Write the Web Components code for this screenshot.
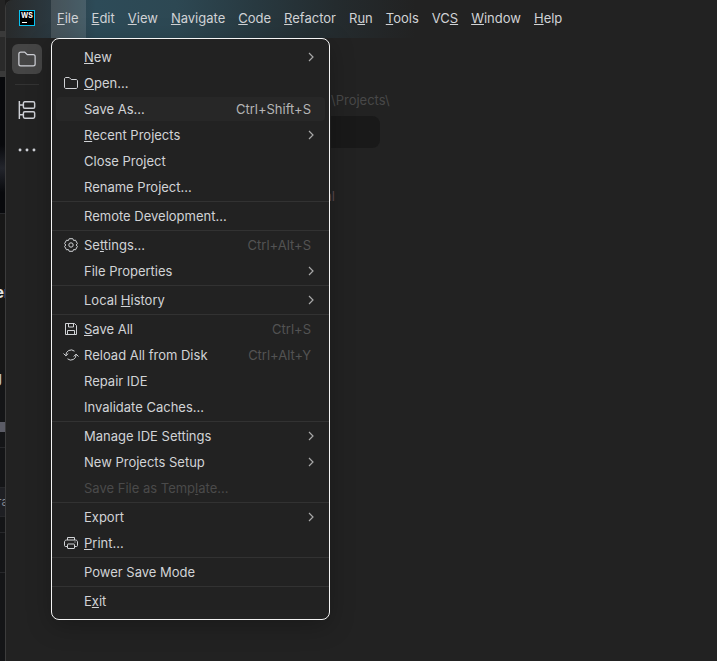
<!DOCTYPE html>
<html lang="en">
<head>
<meta charset="utf-8">
<title>WebStorm</title>
<style>
    html, body {
        height: 100%;
        margin: 0;
    }

    body {
        background: #1a1a1a;
        color: #d1d3d6;
        font: 13px/16px Inter, "Liberation Sans", sans-serif;
        overflow: hidden;
    }
</style>
</head>
<body>
<ide-desktop></ide-desktop>

<script>
const ICONS = {
    folder: `<path d="M1.500 4c0-.9.6-1.500 1.500-1.500h3.200l2 2H13c.9 0 1.500.6 1.500 1.500v6c0 .9-.6 1.500-1.500 1.500H3c-.9 0-1.500-.6-1.500-1.500z"/>`,
    structure: `<g stroke-width="1.300"><path d="M1.200 0v16M1.200 3.500h3.500M1.200 12.200h3.500"/><rect x="4.800" y=".7" width="10" height="5.800" rx="1.200"/><rect x="4.800" y="9.500" width="10" height="5.800" rx="1.200"/></g>`,
    more: `<g fill="currentColor" stroke="none"><circle cx="1.800" cy="8" r="1.300"/><circle cx="8" cy="8" r="1.300"/><circle cx="14.200" cy="8" r="1.300"/></g>`,
    settings: `<path d="M6.200 1.700h3.600l.8 1.800 1.900-.3 1.900 3.400L13.200 8l1.200 1.400-1.900 3.400-1.900-.3-.8 1.800H6.200l-.8-1.800-1.900.3-1.900-3.400L2.800 8 1.600 6.600l1.900-3.400 1.900.3z"/><circle cx="8" cy="8" r="2.200"/>`,
    save: `<path d="M2.500 2.500h9l2 2v9h-11zM5.500 2.500v3.500h5v-3.500M4.500 13.500v-4h7v4"/>`,
    reload: `<path d="M2.900 8.500a5.200 5.200 0 0 1 8.600-4.300M13.100 7.500a5.200 5.200 0 0 1-8.600 4.300M.5 6.500l2.400 2.400 2.400-2.400M10.700 9.500l2.400-2.400 2.400 2.400"/>`,
    print: `<path d="M4.500 5V2.500h7V5M4 11.500H2.500c-.6 0-1-.4-1-1V7c0-1.100.9-2 2-2h9c1.100 0 2 .9 2 2v3.500c0 .6-.4 1-1 1H12"/><rect x="4.500" y="9" width="7" height="4.500" rx=".5"/><path d="M11.500 7h1"/>`
};

// "_" marks the mnemonic: the letter after it is underlined
function mnemonic(text) {
    return text.replace(/_(.)/, "<u>$1</u>");
}

const UNDERLINE = `
    u {
        text-decoration: underline;
        text-decoration-thickness: 1px;
        text-underline-offset: 1px;
        text-decoration-skip-ink: none;
    }
`;

class IdeIcon extends HTMLElement {
    connectedCallback() {
        this.attachShadow({mode: "open"});
        this.shadowRoot.innerHTML = `
            <style>
                :host {
                    display: block;
                    flex: none;
                    width: var(--icon-size, 16px);
                    height: var(--icon-size, 16px);
                }

                svg {
                    display: block;
                    width: 100%;
                    height: 100%;
                    overflow: visible;
                    fill: none;
                    stroke: currentColor;
                    stroke-linejoin: round;
                }
            </style>
            <svg viewBox="0 0 16 16" aria-hidden="true">${ICONS[this.getAttribute("name")] || ""}</svg>
        `;
    }
}

class MenuEntry extends HTMLElement {
    connectedCallback() {
        const icon = this.getAttribute("icon");
        const keys = this.getAttribute("keys");
        const disabled = this.hasAttribute("disabled");

        this.attachShadow({mode: "open"});
        this.shadowRoot.innerHTML = `
            <style>
                :host {
                    display: block;
                    padding: 1px 4px;
                }

                button {
                    display: flex;
                    align-items: center;
                    gap: 5px;
                    width: 100%;
                    height: 24px;
                    padding: 0 11px 0 7px;
                    border: 0;
                    border-radius: 4px;
                    background: none;
                    color: inherit;
                    font: inherit;
                    text-align: left;
                }

                :host([selected]) button {
                    background: #272727;
                }

                button:disabled {
                    color: #4a4a4a;
                }

                .label {
                    flex: 1;
                    white-space: nowrap;
                }

                .keys {
                    padding-right: 3px;
                    color: #535353;
                }

                :host([selected]) .keys {
                    color: #b5b5b5;
                }

                .arrow {
                    width: 6px;
                    height: 10px;
                    fill: none;
                    stroke: #a8a8a8;
                    stroke-width: 1.2;
                }

                ${UNDERLINE}
            </style>
            <button role="menuitem" ${disabled ? "disabled" : ""}>
                <ide-icon name="${icon || ""}"></ide-icon>
                <span class="label">${mnemonic(this.getAttribute("label"))}</span>
                ${keys ? `<span class="keys">${keys}</span>` : ""}
                ${this.hasAttribute("submenu") ? `<svg class="arrow" viewBox="0 0 6 10"><path d="M1 1l4 4-4 4"/></svg>` : ""}
            </button>
        `;
    }
}

class MenuPopup extends HTMLElement {
    connectedCallback() {
        this.attachShadow({mode: "open"});
        this.shadowRoot.innerHTML = `
            <style>
                :host {
                    display: block;
                    width: 277px;
                    padding: 5px 0;
                    border: 1px solid #f4f4f4;
                    border-radius: 8px;
                    background: #222222;
                    box-shadow: 0 6px 24px rgba(0, 0, 0, .25);
                }

                ::slotted(hr) {
                    height: 1px;
                    margin: 1px 0;
                    border: 0;
                    background: #323232;
                }
            </style>
            <slot></slot>
        `;
        this.setAttribute("role", "menu");
    }
}

class MenuTitle extends HTMLElement {
    connectedCallback() {
        this.attachShadow({mode: "open"});
        this.shadowRoot.innerHTML = `
            <style>
                :host {
                    display: block;
                    position: relative;
                }

                button {
                    height: 100%;
                    padding: 0 7px 2px 6px;
                    border: 0;
                    background: none;
                    color: inherit;
                    font: inherit;
                }

                :host([open]) button {
                    background: rgba(255, 255, 255, .13);
                }

                /* the popup hangs from its title */
                ::slotted(menu-popup) {
                    position: absolute;
                    top: 100%;
                    left: 0;
                    z-index: 1;
                }

                ${UNDERLINE}
            </style>
            <button aria-haspopup="menu">${mnemonic(this.getAttribute("label"))}</button>
            <slot></slot>
        `;
    }
}

class MenuBar extends HTMLElement {
    connectedCallback() {
        this.attachShadow({mode: "open"});
        this.shadowRoot.innerHTML = `
            <style>
                :host {
                    display: flex;
                    height: 38px;
                    background: linear-gradient(90deg, #282a2b 0, #2b3a42 50px, #2d4b58 90px, #2d4853 170px, #283940 250px, #242b2e 330px, #222222 410px);
                }

                .logo {
                    width: 16px;
                    height: 16px;
                    margin: 10px 16px 0 13px;
                }
            </style>
            <svg class="logo" viewBox="0 0 16 16" role="img" aria-label="WebStorm">
                <rect width="16" height="16" fill="#07c3f2"/>
                <rect x="1" y="1" width="14" height="14" fill="#000"/>
                <text x="2" y="8" fill="#fff" font-family="Inter, sans-serif" font-size="7" font-weight="700">WS</text>
                <rect x="3" y="12" width="5" height="1" fill="#fff"/>
            </svg>
            <slot></slot>
        `;
    }
}

class ToolStripe extends HTMLElement {
    connectedCallback() {
        this.attachShadow({mode: "open"});
        this.shadowRoot.innerHTML = `
            <style>
                :host {
                    display: flex;
                    flex-direction: column;
                    align-items: center;
                    gap: 10px;
                    width: 42px;
                    padding-top: 6px;
                }

                button {
                    display: grid;
                    place-items: center;
                    width: 30px;
                    height: 30px;
                    padding: 0;
                    border: 0;
                    border-radius: 6px;
                    background: none;
                    color: #ced0d6;
                }

                button.active {
                    background: #454545;
                }

                ide-icon {
                    --icon-size: 18px;
                }

                .folder {
                    --icon-size: 20px;
                }

                hr {
                    width: 24px;
                    height: 1px;
                    margin: 0;
                    border: 0;
                    background: #333333;
                }
            </style>
            <button class="active" aria-label="Project"><ide-icon class="folder" name="folder"></ide-icon></button>
            <hr>
            <button aria-label="Structure"><ide-icon name="structure"></ide-icon></button>
            <button aria-label="More tool windows"><ide-icon name="more"></ide-icon></button>
        `;
    }
}

class ProjectPane extends HTMLElement {
    connectedCallback() {
        this.attachShadow({mode: "open"});
        this.shadowRoot.innerHTML = `
            <style>
                :host {
                    display: flex;
                    flex-direction: column;
                    align-items: flex-start;
                    padding: 54px 0 0 283px;
                    color: #484848;
                }

                input {
                    box-sizing: border-box;
                    width: 49px;
                    height: 32px;
                    margin: 8px 0 40px;
                    border: 0;
                    border-radius: 0 8px 8px 0;
                    background: #191919;
                    color: inherit;
                    font: inherit;
                }

                .tail {
                    display: flex;
                    justify-content: flex-end;
                    width: 4px;
                    color: #5a4a4c;
                }
            </style>
            <label for="path">\\Projects\\</label>
            <input id="path">
            <span class="tail">al</span>
        `;
    }
}

class IdeWindow extends HTMLElement {
    connectedCallback() {
        this.attachShadow({mode: "open"});
        this.shadowRoot.innerHTML = `
            <style>
                :host {
                    display: flex;
                    flex-direction: column;
                    border-left: 1px solid #3c3c3c;
                    border-top-left-radius: 8px;
                    background: #222222;
                }

                ::slotted(menu-bar) {
                    border-top-left-radius: 7px;
                }

                .body {
                    display: flex;
                    flex: 1;
                }

                project-pane {
                    flex: 1;
                }
            </style>
            <slot></slot>
            <div class="body">
                <tool-stripe></tool-stripe>
                <project-pane></project-pane>
            </div>
        `;
    }
}

// The sliver of another window that shows beside the IDE
class BackWindow extends HTMLElement {
    connectedCallback() {
        this.attachShadow({mode: "open"});
        this.shadowRoot.innerHTML = `
            <style>
                :host {
                    display: flex;
                    flex-direction: column;
                    overflow: hidden;
                    background: #141517;
                    color: #e4e4e4;
                }

                div {
                    display: flex;
                    box-sizing: border-box;
                    flex: none;
                    align-items: center;
                    justify-content: center;
                    border-bottom: 1px solid #26272a;
                }

                .tab { height: 31px; background: #242424; border: 0; }
                .edge { height: 6px; background: #3a3a3a; border: 0; }
                .bar { height: 34px; background: #2a2a2a; border: 0; }
                .photo { height: 137px; background: linear-gradient(#08090c 50%, #23252c 67%, #08090c 85%); }
                .heading { height: 156px; border: 0; background: #171717; font-size: 16px; font-weight: 700; }
                .text { height: 52px; padding-right: 3px; border: 0; font-size: 15px; font-weight: 700; align-items: flex-start; justify-content: flex-end; color: #b9bdc8; }
                .scroll { height: 10px; background: #5b5c66; border: 0; }
                .row { height: 16px; }
                .gap { height: 40px; }
                .field { height: 29px; background: #1e1f23; color: #85888f; font-size: 12px; }
            </style>
            <div class="tab"></div>
            <div class="edge"></div>
            <div class="bar"></div>
            <div class="edge"></div>
            <div class="photo"></div>
            <div class="heading">er</div>
            <div class="text">g</div>
            <div class="scroll"></div>
            <div class="row"></div>
            <div class="gap"></div>
            <div class="field">ra</div>
            <div class="row"></div>
            <div class="gap"></div>
        `;
    }
}

class IdeDesktop extends HTMLElement {
    connectedCallback() {
        this.attachShadow({mode: "open"});
        this.shadowRoot.innerHTML = `
            <style>
                :host {
                    display: flex;
                    height: 100vh;
                }

                back-window {
                    width: 5px;
                }

                ide-window {
                    flex: 1;
                }
            </style>
            <back-window></back-window>
            <ide-window>
                <menu-bar>
                    <menu-title label="_File" open>
                        <menu-popup>
                            <menu-entry label="_New" submenu></menu-entry>
                            <menu-entry label="_Open..." icon="folder"></menu-entry>
                            <menu-entry label="Save As..." keys="Ctrl+Shift+S" selected></menu-entry>
                            <menu-entry label="_Recent Projects" submenu></menu-entry>
                            <menu-entry label="Close Pro_ject"></menu-entry>
                            <menu-entry label="Rename Project..."></menu-entry>
                            <hr>
                            <menu-entry label="Remote Development..."></menu-entry>
                            <hr>
                            <menu-entry label="Se_ttings..." icon="settings" keys="Ctrl+Alt+S"></menu-entry>
                            <menu-entry label="File Properties" submenu></menu-entry>
                            <hr>
                            <menu-entry label="Local _History" submenu></menu-entry>
                            <hr>
                            <menu-entry label="_Save All" icon="save" keys="Ctrl+S"></menu-entry>
                            <menu-entry label="Reload All from Disk" icon="reload" keys="Ctrl+Alt+Y"></menu-entry>
                            <menu-entry label="Repair IDE"></menu-entry>
                            <menu-entry label="Invalidate Caches..."></menu-entry>
                            <hr>
                            <menu-entry label="Manage IDE Settings" submenu></menu-entry>
                            <menu-entry label="New Projects Setup" submenu></menu-entry>
                            <menu-entry label="Save File as Temp_late..." disabled></menu-entry>
                            <hr>
                            <menu-entry label="Export" submenu></menu-entry>
                            <menu-entry label="_Print..." icon="print"></menu-entry>
                            <hr>
                            <menu-entry label="Power Save Mode"></menu-entry>
                            <hr>
                            <menu-entry label="E_xit"></menu-entry>
                        </menu-popup>
                    </menu-title>
                    <menu-title label="_Edit"></menu-title>
                    <menu-title label="_View"></menu-title>
                    <menu-title label="_Navigate"></menu-title>
                    <menu-title label="_Code"></menu-title>
                    <menu-title label="_Refactor"></menu-title>
                    <menu-title label="R_un"></menu-title>
                    <menu-title label="_Tools"></menu-title>
                    <menu-title label="VC_S"></menu-title>
                    <menu-title label="_Window"></menu-title>
                    <menu-title label="_Help"></menu-title>
                </menu-bar>
            </ide-window>
        `;
    }
}

customElements.define("ide-icon", IdeIcon);
customElements.define("menu-entry", MenuEntry);
customElements.define("menu-popup", MenuPopup);
customElements.define("menu-title", MenuTitle);
customElements.define("menu-bar", MenuBar);
customElements.define("tool-stripe", ToolStripe);
customElements.define("project-pane", ProjectPane);
customElements.define("ide-window", IdeWindow);
customElements.define("back-window", BackWindow);
customElements.define("ide-desktop", IdeDesktop);
</script>
</body>
</html>
